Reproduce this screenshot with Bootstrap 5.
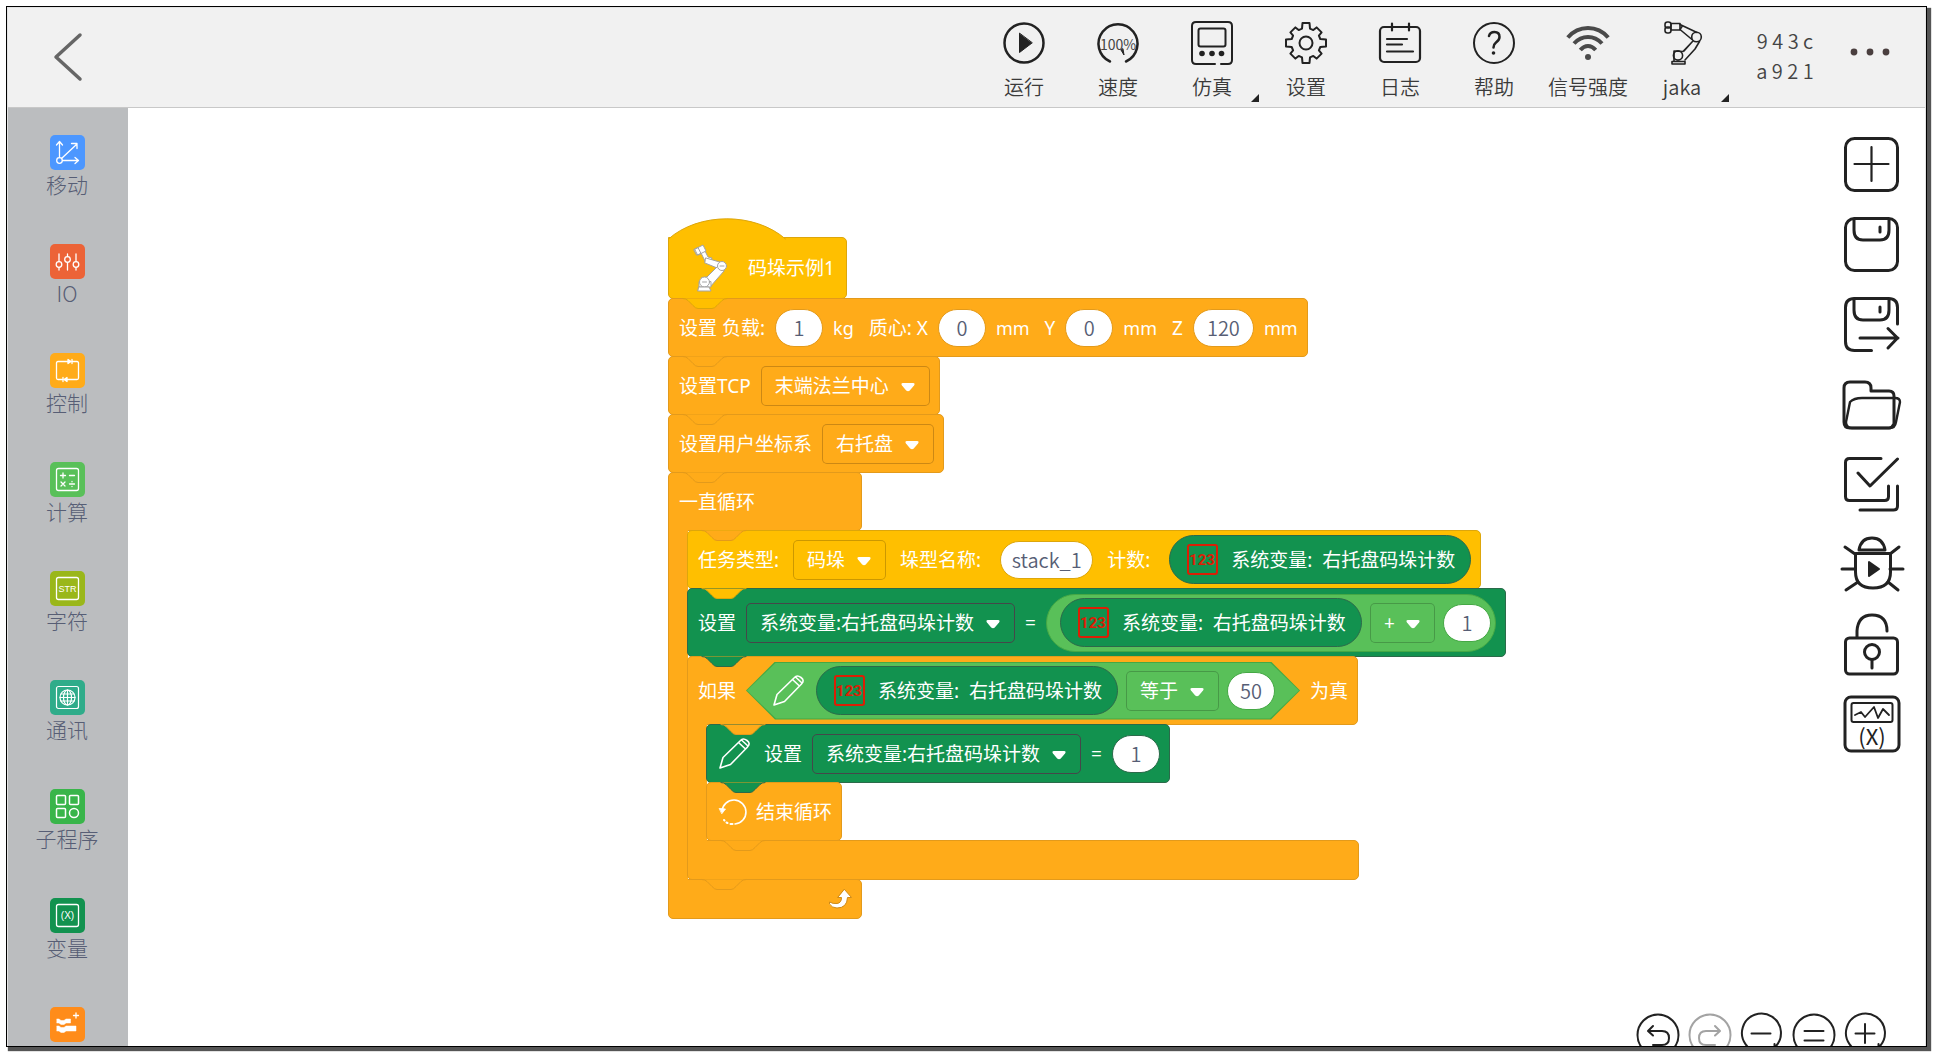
<!DOCTYPE html>
<html lang="zh-CN">
<head>
<meta charset="utf-8">
<meta name="viewport" content="width=device-width, initial-scale=1">
<title>码垛示例1</title>
<link rel="stylesheet" href="https://cdn.jsdelivr.net/npm/bootstrap@5.3.0/dist/css/bootstrap.min.css">
<style>
  body { font-family: "Noto Sans CJK SC", "Noto Sans", sans-serif; background: #fff; color: #333; }
  svg { display: block; overflow: visible; stroke-linecap: round; stroke-linejoin: round; }
  :where(svg:not([fill])) { fill: none; }
  :where(svg:not([stroke])) { stroke: currentColor; }
  button { background: none; border: 0; padding: 0; color: inherit; }

  .page-shell { height: 100vh; padding: 6px 8px 8px 6px; }
  .app-frame { border: 1px solid #000; padding: 1px 1px 0; background: #e4e4e4; box-shadow: 3px 3px 1px 1px #555; }

  /* top bar */
  .top-bar { background: #f1f1f1; border-bottom: 1px solid #c8c8c8; height: 100px; }
  .back-btn { width: 117px; color: #666; }
  .tool-btn { width: 94px; padding-top: 14px; color: #222; }
  .tool-btn .caption { font-size: 20px; font-weight: 350; line-height: 30px; margin-top: 8px; color: #3a3a3a; white-space: nowrap; }
  .corner-mark { right: 0; bottom: 5px; width: 8px; height: 8px; background: #222; clip-path: polygon(100% 0, 100% 100%, 0 100%); }
  .serial-code { width: 112px; padding-bottom: 3px; font-size: 20px; font-weight: 350; line-height: 30px; color: #444; }
  .more-btn { width: 58px; margin-right: 26px; color: #4a3f3f; }

  /* category column */
  .side-nav { width: 120px; background: #bbbdbf; padding: 27px 2px 0 0; gap: 46px; }
  .side-item { width: 100%; font-size: 21px; line-height: 28px; font-weight: 300; color: #575e75; }
  .side-icon { width: 35px; height: 35px; border-radius: 5px; color: #fff; }

  /* program canvas */
  .canvas { background: #fff; }
  .program { padding: 129px 0 0 540px; font-family: "Noto Sans", "Noto Sans CJK SC", sans-serif; font-size: 19px; line-height: 28px; color: #fff; }
  .c-yellow { --fill: #ffbf00; --line: #dda60b; }
  .c-orange { --fill: #ffab19; --line: #e39a1b; }
  .c-green { --fill: #12924f; --line: #2b6a4a; }
  .c-lime { --fill: #59c059; --line: #45a845; }
  .block { position: relative; display: flex; align-items: center; width: max-content; white-space: nowrap; height: 59px; margin-bottom: -1px; padding: 0 9px 0 10px; gap: 10px; background: var(--fill); border: 1px solid var(--line); border-radius: 5px; }
  .block.tall { height: 69px; }
  .block.foot { height: 40px; }
  .block.hat { width: 179px; height: 62px; padding: 0 10px 0 24px; gap: 19px; border-top-left-radius: 0; }
  .hat-top { left: -1px; bottom: 100%; fill: var(--fill); stroke: var(--line); margin-bottom: -1px; }
  .bump { position: absolute; left: 14px; top: 100%; z-index: 2; fill: var(--fill); stroke: var(--line); }
  .notch { top: -1px; }
  .spine { position: relative; width: 20px; margin: -1px -1px -1px 0; z-index: 1; background: var(--fill); border-left: 1px solid var(--line); }
  .spine + div { position: relative; z-index: 1; }
  .c-head { border-bottom-left-radius: 0; }
  .c-foot { border-top-left-radius: 0; }
  .w-loop { width: 194px; }
  .w-if { width: 672px; }
  .unit { font-size: 18px; }
  .unit-gap { margin-right: 5px; }
  .wide-gap { margin-right: 9px; }
  .lead-icon { margin-left: 2px; }
  .value-pill { width: 48px; height: 38px; border: 1px solid var(--line); border-radius: 19px; background: #fff; color: #575e75; text-align: center; padding: 0; font: 350 20px/28px "Noto Sans CJK SC", sans-serif; }
  .pill-mid { width: 61px; }
  .pill-wide { width: 93px; }
  .drop { appearance: none; height: 40px; border: 1px solid #0003; border-radius: 5px; color: #fff; font: inherit; padding: 0 39px 0 13px;
    background: url("data:image/svg+xml,%3Csvg xmlns='http://www.w3.org/2000/svg' width='14' height='9'%3E%3Cpath d='M2 0h10q2.500 0 1 2.500L8.800 7.500q-1.800 1.500-3.600 0L1 2.500Q-.5 0 2 0z' fill='%23fff'/%3E%3C/svg%3E") no-repeat right 14px top 16px; }
  .c-green > .drop { border-color: #45474a; }
  .reporter { display: flex; align-items: center; height: 49px; border-radius: 25px; padding: 0 15px 0 17px; gap: 13px; background: var(--fill); border: 1px solid var(--line); }
  .oval { display: flex; align-items: center; height: 58px; border-radius: 29px; padding: 0 4px 0 13px; gap: 8px; background: var(--fill); border: 1px solid var(--line); }
  .hexa { position: relative; isolation: isolate; display: flex; align-items: center; height: 58px; padding: 0 25px 0 27px; gap: 8px; }
  .hexa::before, .hexa::after { content: ""; position: absolute; z-index: -1; inset: 0; background: var(--line); clip-path: polygon(29px 0, calc(100% - 29px) 0, 100% 50%, calc(100% - 29px) 100%, 29px 100%, 0 50%); }
  .hexa::after { inset: 1px; background: var(--fill); }
  .num-icon { width: 31px; height: 31px; border: 2px solid #dc1e05; border-radius: 3px; color: #dc1e05; }
  .num-icon text { font: 700 15px Roboto, sans-serif; fill: #dc1e05; stroke: none; text-anchor: middle; }

  /* right-hand tools */
  .tool-rail { padding: 24px 21px 0 0; gap: 16px; color: #222; }
  .tool-rail svg { stroke-width: 3; }
  .zoom-bar { right: 38px; bottom: -11px; gap: 8px; color: #222; }
</style>
</head>
<body>
<div class="page-shell">
<div class="app-frame d-flex flex-column h-100">

  <header class="top-bar d-flex flex-shrink-0">
    <button class="back-btn d-flex justify-content-center align-items-center" aria-label="返回">
      <svg width="28" height="48" viewBox="0 0 28 48" stroke-width="3.500"><path d="M27 1 3 23 27 45"/></svg>
    </button>
    <div class="d-flex ms-auto">
      <button class="tool-btn d-flex flex-column align-items-center">
        <svg width="42" height="42" viewBox="0 0 42 42" stroke-width="2.500"><circle cx="21" cy="21" r="19.500"/><path d="M16.500 11.500v19l12.500-9.500z" fill="currentColor" stroke-width="1"/></svg>
        <span class="caption">运行</span>
      </button>
      <button class="tool-btn d-flex flex-column align-items-center">
        <svg width="42" height="42" viewBox="0 0 42 42" stroke-width="2.500"><path d="M13 39.500A19.500 19.500 0 1 1 29 39.500"/><path d="M24 28l3 5-1-6z" stroke-width="1" fill="#333"/><text x="21" y="28" font-size="14" text-anchor="middle" fill="#444" stroke="none">100%</text></svg>
        <span class="caption">速度</span>
      </button>
      <button class="tool-btn position-relative d-flex flex-column align-items-center">
        <svg width="42" height="42" viewBox="0 0 42 42" stroke-width="2"><path d="M24 42H5q-4 0-4-4V4q0-4 4-4h32q4 0 4 4v34q0 4-4 4h-7"/><rect x="7.500" y="6.500" width="27" height="18" rx="2"/><g fill="currentColor" stroke="none"><circle cx="11" cy="31.500" r="2.800"/><circle cx="21" cy="31.500" r="2.800"/><circle cx="30.500" cy="31.500" r="2.800"/></g></svg>
        <span class="caption">仿真</span><span class="corner-mark position-absolute"></span>
      </button>
      <button class="tool-btn d-flex flex-column align-items-center">
        <svg width="42" height="42" viewBox="-21 -21 42 42" stroke-width="2"><path d="M-3.500-20H3.500L4-14.300 7.300-12.900 10.600-15.600 15.600-10.600 12.900-7.300 14.300-4 20-3.500V3.500L14.300 4 12.900 7.300 15.600 10.600 10.600 15.600 7.300 12.900 4 14.300 3.500 20H-3.500L-4 14.300-7.300 12.900-10.600 15.600-15.600 10.600-12.900 7.300-14.300 4-20 3.500V-3.500L-14.300-4-12.900-7.300-15.600-10.600-10.600-15.600-7.300-12.900-4-14.300Z"/><circle r="6.500"/></svg>
        <span class="caption">设置</span>
      </button>
      <button class="tool-btn d-flex flex-column align-items-center">
        <svg width="42" height="42" viewBox="0 0 42 42" stroke-width="2.200"><rect x="1" y="5" width="40" height="35" rx="4"/><path d="M13 1.500v7M30 1.500v7M8 17h20M8 22.500h15M8 29.500h26"/></svg>
        <span class="caption">日志</span>
      </button>
      <button class="tool-btn d-flex flex-column align-items-center">
        <svg width="42" height="42" viewBox="0 0 42 42" stroke-width="2"><circle cx="21" cy="21" r="20"/><path d="M16 14q1-4 5.500-4 5 0 5 5 0 3-3.500 5.500-2.500 2-2.500 5" stroke-width="2.500"/><circle cx="20.500" cy="31" r="1.800" fill="currentColor" stroke="none"/></svg>
        <span class="caption">帮助</span>
      </button>
      <button class="tool-btn d-flex flex-column align-items-center">
        <svg width="42" height="42" viewBox="0 0 42 42" stroke="#4a4a4a" stroke-width="4"><g stroke-linecap="butt"><path d="M.8 15.500Q9 6 21 6t20.200 9.500M7 21.500q6-6.500 14-6.500t14 6.500M13.300 28q3.500-4 7.700-4t7.700 4"/></g><circle cx="21" cy="35" r="3" fill="#4a4a4a" stroke="none"/></svg>
        <span class="caption">信号强度</span>
      </button>
      <button class="tool-btn position-relative d-flex flex-column align-items-center">
        <svg width="42" height="42" viewBox="0 0 42 42" stroke-width="1.600"><rect x="4" y="0" width="6" height="6" rx="2.500"/><rect x="4" y="5" width="6" height="6" rx="2.500"/><rect x="10" y="1.500" width="9" height="6.500"/><path d="M19 2.500 36 10.500M19 7.500 31 17.500M21 4.500l-2 3"/><circle cx="35.500" cy="15" r="4.800"/><path d="M32 19 22 29.500l-9-.5v10M38.500 19.500 34 27 24 38M31 20l-8 9"/><circle cx="17" cy="33.500" r="4.600"/><path d="M11 39.500h13v2.500H11z"/></svg>
        <span class="caption">jaka</span><span class="corner-mark position-absolute"></span>
      </button>
      <div class="serial-code d-flex flex-column justify-content-center align-items-center"><span>9 4 3 c</span><span>a 9 2 1</span></div>
      <button class="more-btn d-flex justify-content-center" aria-label="更多">
        <svg width="42" height="88" viewBox="0 0 42 88"><g fill="currentColor" stroke="none"><circle cx="5" cy="44" r="3.400"/><circle cx="21" cy="44" r="3.400"/><circle cx="37" cy="44" r="3.400"/></g></svg>
      </button>
    </div>
  </header>

  <main class="d-flex flex-fill overflow-hidden">
    <nav class="side-nav d-flex flex-column flex-shrink-0 overflow-hidden">
      <button class="side-item d-flex flex-column align-items-center flex-shrink-0"><svg class="side-icon" style="background:#4c97ff" viewBox="0 0 35 35" stroke-width="1.300"><circle cx="9.500" cy="25.500" r="2.800"/><path d="M9.500 22.500V7M6.500 10l3-3.500 3 3.500M12.500 25.500h16M25 22.500l3.500 3-3.500 3M11.500 23.500 27 9M21.500 8.500H27v5"/></svg>移动</button>
      <button class="side-item d-flex flex-column align-items-center flex-shrink-0"><svg class="side-icon" style="background:#ec6337" viewBox="0 0 35 35" stroke-width="1.300"><circle cx="9" cy="20.500" r="2.800"/><circle cx="17.500" cy="15.500" r="2.800"/><circle cx="26" cy="20.500" r="2.800"/><path d="M9 10v7.500M9 23.500V26M17.500 10v2.500M17.500 18.500V26M26 10v7.500M26 23.500V26"/></svg>IO</button>
      <button class="side-item d-flex flex-column align-items-center flex-shrink-0"><svg class="side-icon" style="background:#ffab19" viewBox="0 0 35 35" stroke-width="1.300"><path d="M18 8.500H8q-1.500 0-1.500 1.500v15q0 1.500 1.500 1.500h5M17 26.500h10q1.500 0 1.500-1.500V10q0-1.500-1.500-1.500h-5"/><path d="M18 6.500v4l3-2zM17 24.500v4l-3-2z" fill="#fff"/><path d="M22 6.500v4M13 24.500v4"/></svg>控制</button>
      <button class="side-item d-flex flex-column align-items-center flex-shrink-0"><svg class="side-icon" style="background:#59c059" viewBox="0 0 35 35" stroke-width="1.300"><rect x="6.500" y="6.500" width="22" height="22" rx="2"/><path d="M10.500 13.500h5M13 11v5M19.500 13.500h5M11 20l4 4M15 20l-4 4M19.500 22h5M22 19.500v.3M22 24.300v.3"/></svg>计算</button>
      <button class="side-item d-flex flex-column align-items-center flex-shrink-0"><svg class="side-icon" style="background:#9ab71a" viewBox="0 0 35 35" stroke-width="1.300"><rect x="6.500" y="6.500" width="22" height="22" rx="2"/><text x="17.500" y="21" font-family="Liberation Sans" font-weight="400" font-size="9" text-anchor="middle" fill="#fff" stroke="none">STR</text></svg>字符</button>
      <button class="side-item d-flex flex-column align-items-center flex-shrink-0"><svg class="side-icon" style="background:#2fac8a" viewBox="0 0 35 35" stroke-width="1.200"><rect x="6.500" y="6.500" width="22" height="22" rx="2"/><circle cx="17.500" cy="17.500" r="7.500"/><ellipse cx="17.500" cy="17.500" rx="4" ry="7.500"/><path d="M17.500 10v15M10 17.500h15M11 14h13M11 21h13"/></svg>通讯</button>
      <button class="side-item d-flex flex-column align-items-center flex-shrink-0"><svg class="side-icon" style="background:#39b54a" viewBox="0 0 35 35" stroke-width="1.500"><rect x="6.500" y="6.500" width="9" height="9" rx="1"/><rect x="19.500" y="6.500" width="9" height="9" rx="1"/><rect x="6.500" y="19.500" width="9" height="9" rx="1"/><circle cx="24" cy="24" r="4.500"/></svg>子程序</button>
      <button class="side-item d-flex flex-column align-items-center flex-shrink-0"><svg class="side-icon" style="background:#12924f" viewBox="0 0 35 35" stroke-width="1.300"><rect x="6.500" y="6.500" width="22" height="22" rx="2"/><text x="17.500" y="21" font-family="Liberation Sans" font-weight="400" font-size="10" text-anchor="middle" fill="#fff" stroke="none">(X)</text></svg>变量</button>
      <button class="side-item d-flex flex-column align-items-center flex-shrink-0"><svg class="side-icon" style="background:#ff8c1a" viewBox="0 0 35 35" stroke-width="1.300"><path d="M7 12h2l2 1.500h3l2-1.500h4.500v4H16l-2 1.500h-3L9 16H7zM7 19h2l2 1.500h3L16 19h10v5H16l-2 1.500h-3L9 24H7z" fill="#fff" stroke-width=".5"/><path d="M26 6v5M23.500 8.500h5"/></svg>扩展</button>
    </nav>

    <section class="canvas position-relative d-flex flex-fill overflow-hidden">
      <div class="program">

        <div class="block hat c-yellow">
          <svg class="hat-top position-absolute" width="118" height="21" viewBox="0 0 118 21"><path d="M.5 21C30.500-6 87-6 117.500 21" /></svg>
          <svg width="36" height="48" viewBox="0 0 36 48" fill="#fff" stroke="#a3a3a3" stroke-width="1"><path d="M8 9l4 8 5 1 2-4-4-1-3-6z"/><path d="M2 5l8-4 3 6-8 4zM1 5.500l4-2 3 6-4 1.500z"/><path d="M13 14l17 5-1 7-17-7z"/><path d="M31 27 17 43 8 34l6-1 11-11z"/><circle cx="29" cy="22" r="4.500"/><path d="M6 38v5h12v-5z"/><circle cx="11.500" cy="38" r="5"/><path d="M6 43h10l2 4H5zM27 22h4M9.500 38h4"/></svg>
          <span>码垛示例1</span>
          <svg class="bump" width="44" height="11" viewBox="0 0 44 11"><path d="M0 .5Q3 .5 5 2.500L10 7.500Q12.500 10.500 15 10.500H29Q31.500 10.500 34 7.500L39 2.500Q41 .5 44 .5" /></svg>
        </div>

        <div class="block c-orange">
          <label for="load">设置 负载:</label><input id="load" class="value-pill" value="1">
          <span class="unit unit-gap">kg</span>
          <label for="cx">质心: X</label><input id="cx" class="value-pill" value="0">
          <span class="unit unit-gap">mm</span>
          <label for="cy">Y</label><input id="cy" class="value-pill" value="0">
          <span class="unit unit-gap">mm</span>
          <label for="cz">Z</label><input id="cz" class="value-pill pill-mid" value="120">
          <span class="unit">mm</span>
          <svg class="bump" width="44" height="11" viewBox="0 0 44 11"><path d="M0 .5Q3 .5 5 2.500L10 7.500Q12.500 10.500 15 10.500H29Q31.500 10.500 34 7.500L39 2.500Q41 .5 44 .5" /></svg>
        </div>

        <div class="block c-orange">
          <label for="tcp">设置TCP</label><select id="tcp" class="drop"><option>末端法兰中心</option></select>
          <svg class="bump" width="44" height="11" viewBox="0 0 44 11"><path d="M0 .5Q3 .5 5 2.500L10 7.500Q12.500 10.500 15 10.500H29Q31.500 10.500 34 7.500L39 2.500Q41 .5 44 .5" /></svg>
        </div>

        <div class="block c-orange">
          <label for="frame">设置用户坐标系</label><select id="frame" class="drop"><option>右托盘</option></select>
          <svg class="bump" width="44" height="11" viewBox="0 0 44 11"><path d="M0 .5Q3 .5 5 2.500L10 7.500Q12.500 10.500 15 10.500H29Q31.500 10.500 34 7.500L39 2.500Q41 .5 44 .5" /></svg>
        </div>

        <!-- endless loop -->
        <div class="c-orange">
          <div class="block c-head w-loop"><span>一直循环</span></div>
          <div class="d-flex">
            <div class="spine"></div>
            <div>
              <div class="block c-yellow">
                <svg class="bump notch c-orange" width="44" height="11" viewBox="0 0 44 11"><path d="M0 .5Q3 .5 5 2.500L10 7.500Q12.500 10.500 15 10.500H29Q31.500 10.500 34 7.500L39 2.500Q41 .5 44 .5" /></svg>
                <label class="me-1" for="kind">任务类型:</label><select id="kind" class="drop me-1"><option>码垛</option></select>
                <label class="wide-gap" for="stack">垛型名称:</label><input id="stack" class="value-pill pill-wide me-1" value="stack_1">
                <span class="wide-gap">计数:</span>
                <div class="reporter c-green"><svg class="num-icon" viewBox="0 0 27 27"><text x="13" y="19">123</text></svg><span>系统变量:&nbsp; 右托盘码垛计数</span></div>
                <svg class="bump" width="44" height="11" viewBox="0 0 44 11"><path d="M0 .5Q3 .5 5 2.500L10 7.500Q12.500 10.500 15 10.500H29Q31.500 10.500 34 7.500L39 2.500Q41 .5 44 .5" /></svg>
              </div>

              <div class="block tall c-green">
                <label for="var1">设置</label><select id="var1" class="drop"><option>系统变量:右托盘码垛计数</option></select>
                <span>=</span>
                <div class="oval c-lime">
                  <div class="reporter c-green"><svg class="num-icon" viewBox="0 0 27 27"><text x="13" y="19">123</text></svg><span>系统变量:&nbsp; 右托盘码垛计数</span></div>
                  <select class="drop" aria-label="运算符"><option>+</option></select>
                  <input class="value-pill" aria-label="增量" value="1">
                </div>
                <svg class="bump" width="44" height="11" viewBox="0 0 44 11"><path d="M0 .5Q3 .5 5 2.500L10 7.500Q12.500 10.500 15 10.500H29Q31.500 10.500 34 7.500L39 2.500Q41 .5 44 .5" /></svg>
              </div>

              <!-- condition -->
              <div class="c-orange">
                <div class="block tall c-head">
                  <span>如果</span>
                  <div class="hexa c-lime">
                    <svg width="31" height="31" viewBox="0 0 31 31" stroke-width="1.600"><path d="M1 30 4 19.500 21.500 2.500Q24-.5 28 2.500T28.500 9L11.500 26.500ZM19.500 4.500l7 6.500M22.500 2l6.500 6"/></svg>
                    <div class="reporter c-green ms-1"><svg class="num-icon" viewBox="0 0 27 27"><text x="13" y="19">123</text></svg><span>系统变量:&nbsp; 右托盘码垛计数</span></div>
                    <select class="drop" aria-label="比较"><option>等于</option></select>
                    <input class="value-pill" aria-label="比较值" value="50">
                  </div>
                  <span>为真</span>
                </div>
                <div class="d-flex">
                  <div class="spine"></div>
                  <div>
                    <div class="block c-green">
                      <svg class="bump notch c-orange" width="44" height="11" viewBox="0 0 44 11"><path d="M0 .5Q3 .5 5 2.500L10 7.500Q12.500 10.500 15 10.500H29Q31.500 10.500 34 7.500L39 2.500Q41 .5 44 .5" /></svg>
                      <svg class="lead-icon me-1" width="31" height="31" viewBox="0 0 31 31" stroke-width="1.600"><path d="M1 30 4 19.500 21.500 2.500Q24-.5 28 2.500T28.500 9L11.500 26.500ZM19.500 4.500l7 6.500M22.500 2l6.500 6"/></svg>
                      <label for="var2">设置</label><select id="var2" class="drop"><option>系统变量:右托盘码垛计数</option></select>
                      <span>=</span><input class="value-pill" aria-label="新值" value="1">
                      <svg class="bump" width="44" height="11" viewBox="0 0 44 11"><path d="M0 .5Q3 .5 5 2.500L10 7.500Q12.500 10.500 15 10.500H29Q31.500 10.500 34 7.500L39 2.500Q41 .5 44 .5" /></svg>
                    </div>
                    <div class="block c-orange">
                      <svg class="lead-icon" width="27" height="26" viewBox="0 0 27 26" stroke-width="1.600"><path d="M3 12A12 12 0 1 1 16 25"/><path d="M13.500 25h-2M8.500 24l-1-.5M5.500 21.500l-.5-.5" stroke-width="2"/><path d="M.5 9.500 6.500 10 3 14.500z" fill="#fff" stroke-width=".8"/></svg>
                      <span>结束循环</span>
                      <svg class="bump" width="44" height="11" viewBox="0 0 44 11"><path d="M0 .5Q3 .5 5 2.500L10 7.500Q12.500 10.500 15 10.500H29Q31.500 10.500 34 7.500L39 2.500Q41 .5 44 .5" /></svg>
                    </div>
                  </div>
                </div>
                <div class="block foot c-foot w-if">
                  <svg class="bump" width="44" height="11" viewBox="0 0 44 11"><path d="M0 .5Q3 .5 5 2.500L10 7.500Q12.500 10.500 15 10.500H29Q31.500 10.500 34 7.500L39 2.500Q41 .5 44 .5" /></svg>
                </div>
              </div>
            </div>
          </div>
          <div class="block foot c-foot w-loop justify-content-end">
            <svg width="23" height="20" viewBox="0 0 23 20" fill="#fff" stroke="#cf8b17" stroke-width="1"><path d="M15.500.5 22.500 8.500H18.500Q18 19 8 19 3 19 .5 15V13Q4 15 8 14.500 12.500 14 12.500 8.500H9Z"/></svg>
          </div>
        </div>

      </div>

      <div class="tool-rail d-flex flex-column ms-auto">
        <button aria-label="新建"><svg width="64" height="64" viewBox="0 0 64 64"><rect x="5.500" y="6.500" width="52" height="52" rx="9"/><path d="M31.500 15v34M14.500 32h34" stroke-width="2.200"/></svg></button>
        <button aria-label="保存"><svg width="64" height="64" viewBox="0 0 64 64"><rect x="5.500" y="6.500" width="52" height="52" rx="9"/><path d="M14 7v11q0 10 9 10h17q9 0 9-10V7M40 15v5"/></svg></button>
        <button aria-label="另存为"><svg width="64" height="64" viewBox="0 0 64 64"><path d="M31.500 58.500h-17q-9 0-9-9v-34q0-9 9-9h34q9 0 9 9V32"/><path d="M14 7v11q0 10 9 10h17q9 0 9-10V7M40 15v5"/><path d="M20 46h38M48 36.500l9.500 9.500-9.500 10"/></svg></button>
        <button aria-label="打开"><svg width="64" height="64" viewBox="0 0 64 64"><path d="M54 52V24q0-5-5-5H31v-3q0-6-6-6H10q-6 0-6 6v34q0 6 6 6h39q3 0 5-4z"/><path d="M10 30q4-4 12-4h33q5 0 5 4l-4 20q-1 6-6 6H12q-6 0-6-6z" stroke-width="2.400"/></svg></button>
        <button aria-label="检查"><svg width="64" height="64" viewBox="0 0 64 64"><path d="M41 6.500H9.500q-4 0-4 4v34q0 4 4 4h35q4 0 4-4V34"/><path d="M18 21l12 13L57.500 7M57.500 34v20q0 4-4 4H20"/></svg></button>
        <button aria-label="调试"><svg width="64" height="64" viewBox="0 0 64 64"><path d="M19 18q2-12 13-12t13 12zM15.500 21.500h35V40q0 16-17.500 16T15.500 40z"/><path d="M15 22 5 15M50 22l9-7M15 37H2M50 37h13M18 50 6 58M48 50l10 8"/><path d="M29 30v14l10-7z" fill="currentColor" stroke-width="2"/></svg></button>
        <button aria-label="解锁"><svg width="64" height="64" viewBox="0 0 64 64"><rect x="5.500" y="26" width="52" height="36" rx="4"/><path d="M17 25v-6Q18 3 32 3q15 0 15 16M32 48v8"/><circle cx="32" cy="40" r="7.500"/></svg></button>
        <button aria-label="变量监视"><svg width="64" height="64" viewBox="0 0 64 64"><rect x="5" y="5" width="54" height="54" rx="6"/><rect x="11.500" y="11" width="41" height="19" rx="2" stroke-width="2"/><path d="M15 23l6-3 4 5 9-10 4 11 5-9 6 6" stroke-width="1.800"/><text x="32" y="53" font-family="Noto Sans CJK SC" font-size="22" text-anchor="middle" fill="currentColor" stroke="none">(X)</text></svg></button>
      </div>

      <div class="zoom-bar position-absolute d-flex">
        <button aria-label="撤销"><svg width="44" height="44" viewBox="0 0 44 44" stroke-width="2"><circle cx="23" cy="22" r="20.500"/><path d="M14 18h13q7 0 7 7t-7 7h-9M18 13l-5 5 5 4.500" /></svg></button>
        <button aria-label="重做" style="color:#a3a3a3"><svg width="44" height="44" viewBox="0 0 44 44" stroke-width="2"><circle cx="23" cy="22" r="20.500"/><path d="M32 18H19q-7 0-7 7t7 7h9M28 13l5 5-5 4.500"/></svg></button>
        <button aria-label="缩小"><svg width="44" height="44" viewBox="0 0 44 44" stroke-width="2"><path d="M35.500 34.500A19.500 19.500 0 1 0 22 39.500M35.500 31v4l4 4M12.500 20.500h19"/></svg></button>
        <button aria-label="还原"><svg width="44" height="44" viewBox="0 0 44 44" stroke-width="2"><circle cx="23" cy="22" r="20.500"/><path d="M13.500 18h19M13.500 27.500h19"/></svg></button>
        <button aria-label="放大"><svg width="44" height="44" viewBox="0 0 44 44" stroke-width="2"><path d="M35.500 34.500A19.500 19.500 0 1 0 22 39.500M35.500 31v4l4 4M12.500 20.500h19M22 11v19"/></svg></button>
      </div>
    </section>
  </main>
</div>
</div>
<script src="https://cdn.jsdelivr.net/npm/bootstrap@5.3.0/dist/js/bootstrap.bundle.min.js"></script>
</body>
</html>
